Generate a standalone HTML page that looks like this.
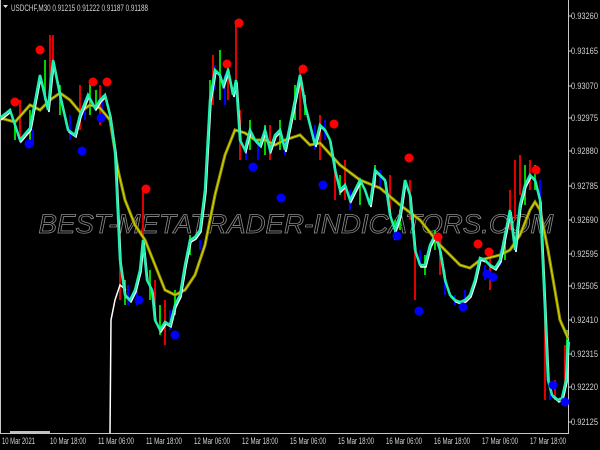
<!DOCTYPE html>
<html><head><style>
body{margin:0;background:#000;width:600px;height:450px;overflow:hidden}
svg{display:block}
text{font-family:"Liberation Sans",sans-serif}
</style></head><body>
<svg width="600" height="450" viewBox="0 0 600 450">
<rect width="600" height="450" fill="#000"/>
<line x1="568.5" y1="0" x2="568.5" y2="434" stroke="#c8c8c8"/>
<line x1="0" y1="433.5" x2="569" y2="433.5" stroke="#c8c8c8"/>
<line x1="0.5" y1="0" x2="0.5" y2="434" stroke="#c8c8c8"/>
<g stroke="#c8c8c8">
<line x1="568" y1="16" x2="572" y2="16"/><line x1="568" y1="51" x2="572" y2="51"/><line x1="568" y1="86" x2="572" y2="86"/><line x1="568" y1="118" x2="572" y2="118"/><line x1="568" y1="151" x2="572" y2="151"/><line x1="568" y1="186" x2="572" y2="186"/><line x1="568" y1="220" x2="572" y2="220"/><line x1="568" y1="254" x2="572" y2="254"/><line x1="568" y1="286" x2="572" y2="286"/><line x1="568" y1="320" x2="572" y2="320"/><line x1="568" y1="354" x2="572" y2="354"/><line x1="568" y1="387" x2="572" y2="387"/><line x1="568" y1="422" x2="572" y2="422"/>
</g>
<g fill="#d0d0d0" font-size="9">
<g>
<text x="571" y="19" textLength="27" lengthAdjust="spacingAndGlyphs">0.93260</text><text x="571" y="54" textLength="27" lengthAdjust="spacingAndGlyphs">0.93165</text><text x="571" y="89" textLength="27" lengthAdjust="spacingAndGlyphs">0.93070</text><text x="571" y="121" textLength="27" lengthAdjust="spacingAndGlyphs">0.92975</text><text x="571" y="154" textLength="27" lengthAdjust="spacingAndGlyphs">0.92880</text><text x="571" y="189" textLength="27" lengthAdjust="spacingAndGlyphs">0.92785</text><text x="571" y="223" textLength="27" lengthAdjust="spacingAndGlyphs">0.92690</text><text x="571" y="257" textLength="27" lengthAdjust="spacingAndGlyphs">0.92595</text><text x="571" y="289" textLength="27" lengthAdjust="spacingAndGlyphs">0.92505</text><text x="571" y="323" textLength="27" lengthAdjust="spacingAndGlyphs">0.92410</text><text x="571" y="357" textLength="27" lengthAdjust="spacingAndGlyphs">0.92315</text><text x="571" y="390" textLength="27" lengthAdjust="spacingAndGlyphs">0.92220</text><text x="571" y="425" textLength="27" lengthAdjust="spacingAndGlyphs">0.92125</text>
</g>
<g>
<text x="2" y="444" textLength="33" lengthAdjust="spacingAndGlyphs">10 Mar 2021</text><text x="50" y="444" textLength="36" lengthAdjust="spacingAndGlyphs">10 Mar 18:00</text><text x="98" y="444" textLength="36" lengthAdjust="spacingAndGlyphs">11 Mar 06:00</text><text x="146" y="444" textLength="36" lengthAdjust="spacingAndGlyphs">11 Mar 18:00</text><text x="194" y="444" textLength="36" lengthAdjust="spacingAndGlyphs">12 Mar 06:00</text><text x="242" y="444" textLength="36" lengthAdjust="spacingAndGlyphs">12 Mar 18:00</text><text x="290" y="444" textLength="36" lengthAdjust="spacingAndGlyphs">15 Mar 06:00</text><text x="338" y="444" textLength="36" lengthAdjust="spacingAndGlyphs">15 Mar 18:00</text><text x="386" y="444" textLength="36" lengthAdjust="spacingAndGlyphs">16 Mar 06:00</text><text x="434" y="444" textLength="36" lengthAdjust="spacingAndGlyphs">16 Mar 18:00</text><text x="482" y="444" textLength="36" lengthAdjust="spacingAndGlyphs">17 Mar 06:00</text><text x="530" y="444" textLength="36" lengthAdjust="spacingAndGlyphs">17 Mar 18:00</text>
<text x="11" y="11" textLength="137" lengthAdjust="spacingAndGlyphs">USDCHF,M30  0.91215 0.91222 0.91187 0.91188</text>
</g>
</g>
<path d="M3 5h5l-2.5 3z" fill="#ddd"/>
<line x1="10" y1="432" x2="50" y2="432" stroke="#fff" stroke-width="1.5"/>
<text x="296" y="233" text-anchor="middle" font-size="27" font-style="italic" fill="none" stroke="#8a8a8a" stroke-width="0.8" textLength="515" lengthAdjust="spacingAndGlyphs">BEST-METATRADER-INDICATORS.COM</text>
<g stroke-width="2">
<path d="M20 100v40M50 35v65M53 35v40M80 85v45M100 85v40M120 250v50M143 190v60M155 280v40M165 300v45M213 55v50M228 60v40M236 20v70M240 110v50M270 125v35M300 70v50M320 115v45M335 160v40M345 160v40M390 175v40M410 180v40M415 250v50M440 235v40M490 250v40M510 190v40M515 160v60M520 155v40M530 160v30M545 300v100M555 380v20M565 345v40" stroke="#e00000"/>
<path d="M15 120v20M30 110v30M45 60v40M60 85v30M90 80v35M96 90v20M125 280v25M150 270v30M160 305v30M175 290v25M190 235v20M210 80v25M220 50v50M250 120v30M265 125v30M280 120v30M295 85v35M305 95v20M340 175v20M360 180v25M375 165v20M395 220v20M400 210v20M425 255v20M435 230v20M505 240v20M525 165v40M535 165v25M567 330v45" stroke="#00d000"/>
<path d="M33 130v15M70 115v25M85 100v20M102 95v25M128 285v20M137 290v15M170 310v20M200 240v10M215 65v25M225 75v30M246 140v20M258 140v20M285 140v15M315 125v25M325 120v20M350 190v20M380 170v20M420 250v15M445 270v25M455 295v10M465 290v15M485 265v15M500 250v15M540 180v20M550 385v15" stroke="#0000ff"/>
</g>
<polyline fill="none" stroke="#909000" stroke-width="3" points="0,118 15,122 30,105 40,110 50,100 60,93 70,100 80,112 90,105 100,108 110,120 118,170 125,200 135,225 145,240 155,265 165,290 175,295 185,290 195,275 205,245 215,195 225,155 235,130 245,133 255,140 265,140 275,145 285,140 300,135 310,145 320,143 340,165 360,180 380,188 400,205 420,220 440,245 460,265 470,268 480,260 500,255 510,250 520,235 530,210 535,202 540,210 548,250 560,320 568,338"/>
<polyline fill="none" stroke="#d8d800" stroke-width="1" points="0,118 15,122 30,105 40,110 50,100 60,93 70,100 80,112 90,105 100,108 110,120 118,170 125,200 135,225 145,240 155,265 165,290 175,295 185,290 195,275 205,245 215,195 225,155 235,130 245,133 255,140 265,140 275,145 285,140 300,135 310,145 320,143 340,165 360,180 380,188 400,205 420,220 440,245 460,265 470,268 480,260 500,255 510,250 520,235 530,210 535,202 540,210 548,250 560,320 568,338"/>
<polyline fill="none" stroke="#fff" stroke-width="1.5" points="110,433 111,320 115,300 120,285 126,290"/>
<polyline fill="none" stroke="#ffffff" stroke-width="1.5" transform="translate(1,2)" points="0,118 10,110 20,140 30,128 40,75 48,110 53,60 60,95 68,130 75,135 80,115 88,95 95,108 100,100 105,95 110,115 115,150 120,260 125,295 130,300 135,290 140,270 143,240 147,280 152,290 155,320 160,330 165,322 170,325 175,305 180,295 185,265 190,240 195,237 200,230 205,190 210,100 215,70 220,75 223,85 228,70 233,95 236,80 240,140 245,150 250,130 255,140 260,145 265,130 270,150 275,135 280,130 285,150 290,125 295,100 300,75 305,105 310,125 315,145 320,125 325,130 330,140 335,170 340,190 345,185 350,200 355,190 360,180 365,190 370,205 375,170 380,175 385,180 390,215 395,230 400,215 405,180 410,195 415,250 420,265 425,265 430,245 435,235 440,250 445,280 450,295 455,300 460,302 465,300 470,295 475,280 480,258 485,260 490,265 495,268 500,260 505,235 510,210 515,250 520,205 525,185 530,175 535,180 540,200 545,310 548,380 552,395 558,400 562,398 566,380 568,340"/>
<polyline fill="none" stroke="#20f0b0" stroke-width="2.5" points="0,118 10,110 20,140 30,128 40,75 48,110 53,60 60,95 68,130 75,135 80,115 88,95 95,108 100,100 105,95 110,115 115,150 120,260 125,295 130,300 135,290 140,270 143,240 147,280 152,290 155,320 160,330 165,322 170,325 175,305 180,295 185,265 190,240 195,237 200,230 205,190 210,100 215,70 220,75 223,85 228,70 233,95 236,80 240,140 245,150 250,130 255,140 260,145 265,130 270,150 275,135 280,130 285,150 290,125 295,100 300,75 305,105 310,125 315,145 320,125 325,130 330,140 335,170 340,190 345,185 350,200 355,190 360,180 365,190 370,205 375,170 380,175 385,180 390,215 395,230 400,215 405,180 410,195 415,250 420,265 425,265 430,245 435,235 440,250 445,280 450,295 455,300 460,302 465,300 470,295 475,280 480,258 485,260 490,265 495,268 500,260 505,235 510,210 515,250 520,205 525,185 530,175 535,180 540,200 545,310 548,380 552,395 558,400 562,398 566,380 568,340"/>
<g fill="#ff0000">
<circle cx="15" cy="102" r="4.5"/><circle cx="40" cy="50" r="4.5"/><circle cx="93" cy="82" r="4.5"/><circle cx="107" cy="82" r="4.5"/><circle cx="239" cy="23" r="4.5"/><circle cx="227" cy="64" r="4.5"/><circle cx="303" cy="69" r="4.5"/><circle cx="146" cy="189" r="4.5"/><circle cx="334" cy="124" r="4.5"/><circle cx="409" cy="158" r="4.5"/><circle cx="438" cy="237" r="4.5"/><circle cx="478" cy="244" r="4.5"/><circle cx="489" cy="252" r="4.5"/><circle cx="536" cy="170" r="4.5"/>
</g>
<g fill="#0000ff">
<circle cx="29" cy="144" r="4.5"/><circle cx="82" cy="151" r="4.5"/><circle cx="101" cy="118" r="4.5"/><circle cx="139" cy="300" r="4.5"/><circle cx="175" cy="335" r="4.5"/><circle cx="253" cy="167" r="4.5"/><circle cx="281" cy="198" r="4.5"/><circle cx="323" cy="185" r="4.5"/><circle cx="397" cy="236" r="4.5"/><circle cx="419" cy="311" r="4.5"/><circle cx="463" cy="307" r="4.5"/><circle cx="487" cy="274" r="4.5"/><circle cx="493" cy="277" r="4.5"/><circle cx="553" cy="385" r="4.5"/><circle cx="565" cy="402" r="4.5"/>
</g>
</svg>
</body></html>
